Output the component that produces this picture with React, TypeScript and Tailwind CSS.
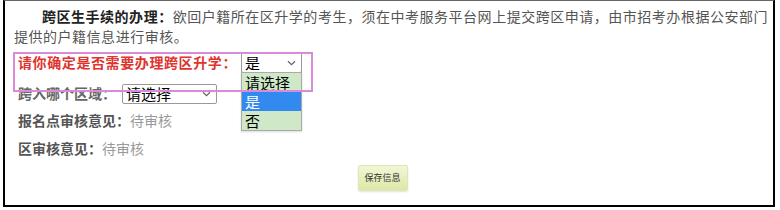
import React from "react";

const Chevron = () => (
  <svg width="9" height="6" viewBox="0 0 9 6" className="shrink-0">
    <path d="M1 1.2 L4.5 4.6 L8 1.2" fill="none" stroke="#666" strokeWidth="1.3" />
  </svg>
);

export default function App() {
  const serif = { fontFamily: '"Noto Sans CJK SC", "Noto Sans", sans-serif' };
  return (
    <div className="relative w-[780px] h-[210px] bg-white" style={serif}>
      <div className="ml-[3px] w-[772px] h-[207px] border-x-2 border-b-2 border-t border-x-black border-b-black border-t-[#666] pl-[9px] pr-[8px] pt-[5px]">
        <p className="text-[14px] leading-[20px] text-[#555] indent-[28px] tracking-[0.52px] whitespace-nowrap">
          <span className="font-bold text-[#222]">跨区生手续的办理：</span>
          欲回户籍所在区升学的考生，须在中考服务平台网上提交跨区申请，由市招考办根据公安部门
          <br />
          提供的户籍信息进行审核。
        </p>

        <div className="mt-[6px] ml-[4px] flex items-center h-[21px]">
          <span className="text-[14px] font-bold text-[#e0342f] tracking-[0.6px]">请你确定是否需要办理跨区升学：</span>
          <div className="relative ml-[4px]">
            <div className="w-[61px] h-[21px] border border-[#999] rounded-[2px] bg-white flex items-center justify-between pl-[3px] pr-[5px]">
              <span className="text-[15px] leading-none text-black">是</span>
              <Chevron />
            </div>
            <div className="absolute left-0 top-[20px] w-[61px] border border-[#aaa] z-10 shadow-[0_1px_2px_rgba(0,0,0,0.15)]">
              <div className="h-[19px] bg-[#cfe9c8] text-[15px] leading-[19px] pl-[3px] text-black">请选择</div>
              <div className="h-[19px] bg-[#3289f0] text-[15px] leading-[19px] pl-[3px] text-white">是</div>
              <div className="h-[19px] bg-[#cfe9c8] text-[15px] leading-[19px] pl-[3px] text-black">否</div>
            </div>
          </div>
        </div>

        <div className="mt-[10px] ml-[4px] flex items-center h-[21px]">
          <span className="text-[14px] text-[#666] font-bold">跨入哪个区域：</span>
          <div className="ml-[6px] w-[95px] h-[20px] border border-[#999] rounded-[2px] bg-white flex items-center justify-between pl-[3px] pr-[5px]">
            <span className="text-[15px] leading-none text-black">请选择</span>
            <Chevron />
          </div>
        </div>

        <div className="mt-[6px] ml-[4px] text-[14px] leading-[20px] h-[20px]">
          <span className="text-[#555] font-bold">报名点审核意见：</span>
          <span className="text-[#999]">待审核</span>
        </div>

        <div className="mt-[8px] ml-[4px] text-[14px] leading-[20px] h-[20px]">
          <span className="text-[#555] font-bold">区审核意见：</span>
          <span className="text-[#999]">待审核</span>
        </div>

        <div className="mt-[7px] flex justify-center pr-[14px]">
          <button className="w-[50px] h-[26px] border border-[#dfe6b8] rounded-[2px] bg-gradient-to-b from-[#f2f6d6] to-[#dde8a6] text-[9px] text-[#333] shadow-[0_1px_2px_rgba(0,0,0,0.12)]">
            保存信息
          </button>
        </div>
      </div>

      <div className="absolute left-[13px] top-[52px] w-[300px] h-[40px] border-2 border-[#d98bd9] z-20 pointer-events-none" />
    </div>
  );
}
